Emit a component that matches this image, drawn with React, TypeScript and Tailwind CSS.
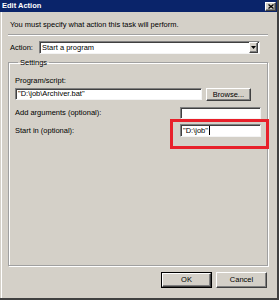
const sunken =
  "bg-white text-black border border-t-[#808080] border-l-[#808080] border-r-[#f4f4f4] border-b-[#f4f4f4] shadow-[inset_1px_1px_0_#404040]";
const raised =
  "bg-[#d4d0c8] text-black border border-t-white border-l-white border-r-[#404040] border-b-[#404040] shadow-[inset_-1px_-1px_0_#808080]";

function CloseBox() {
  return (
    <div className={`${raised} w-[11px] h-[9px] flex items-center justify-center`}>
      <svg width="6" height="5" viewBox="0 0 6 5">
        <path d="M0.5 0.5 L5.5 4.5 M5.5 0.5 L0.5 4.5" stroke="#000" strokeWidth="1.3" />
      </svg>
    </div>
  );
}

export default function App() {
  return (
    <div
      className="w-[279px] h-[300px] bg-[#d4d0c8] flex flex-col border-r-2 border-b-2 border-r-[#404040] border-b-[#404040] text-[7.5px] text-black overflow-hidden"
      style={{ fontFamily: '"Liberation Sans", Arial, sans-serif' }}
    >
      <div className="h-[12px] bg-[#0a246a] flex items-center justify-between pl-[2px] pr-[1px]">
        <span className="text-white font-bold leading-none">Edit Action</span>
        <CloseBox />
      </div>

      <div className="flex-1 flex flex-col ml-px border-l border-l-white pl-[6px] pr-[9px]">
        <p className="mt-[7px] h-[11px] leading-[11px] pl-[2px]">
          You must specify what action this task will perform.
        </p>
        <div className="mt-[4px] h-[2px] border-t border-t-[#a0a0a0] border-b border-b-white" />

        <div className="mt-[5px] h-[13px] flex items-center pl-[2px] pr-[8px]">
          <span className="w-[29px]">Action:</span>
          <div className={`${sunken} flex-1 h-[13px] flex items-center pl-[2px] pr-px`}>
            <span className="flex-1">Start a program</span>
            <div className={`${raised} w-[9px] h-[11px] flex items-center justify-center`}>
              <svg width="5" height="3" viewBox="0 0 5 3">
                <path d="M0 0 H5 L2.5 3 Z" fill="#000" />
              </svg>
            </div>
          </div>
        </div>

        <fieldset className="mt-[3px] flex-1 min-h-0 border border-[#a0a0a0] shadow-[inset_1px_1px_0_#fff,1px_1px_0_#fff] px-[6px]">
          <legend className="ml-[3px] px-[2px] leading-[11px]">Settings</legend>

          <p className="mt-[7px] leading-[11px]">Program/script:</p>
          <div className="mt-[2px] flex items-start gap-[4px]">
            <div className={`${sunken} w-[187px] h-[12px] flex items-center pl-[2px]`}>
              {'"D:\\job\\Archiver.bat"'}
            </div>
            <button className={`${raised} w-[45px] h-[13px] flex items-center justify-center`}>
              Browse...
            </button>
          </div>

          <div className="mt-[6px] h-[12px] flex items-center justify-between">
            <span>Add arguments (optional):</span>
            <div className={`${sunken} w-[81px] h-[12px]`} />
          </div>

          <div className="mt-[5px] h-[13px] flex items-center justify-between">
            <span>Start in (optional):</span>
            <div className="relative">
              <div className={`${sunken} w-[81px] h-[13px] flex items-center pl-[2px]`}>
                <span>{'"D:\\job"'}</span>
                <span className="ml-px w-px h-[9px] bg-black" />
              </div>
              <div className="absolute left-[-10px] top-[-5px] w-[99px] h-[30px] border-[3px] border-[#e8202a]" />
            </div>
          </div>
        </fieldset>

        <div className="mt-[6px] mb-[10px] flex justify-end gap-[4px] pr-px">
          <button className="w-[51px] h-[16px] border border-black flex">
            <span className={`${raised} flex-1 flex items-center justify-center`}>OK</span>
          </button>
          <button className={`${raised} w-[51px] h-[16px] flex items-center justify-center`}>
            Cancel
          </button>
        </div>
      </div>
    </div>
  );
}
